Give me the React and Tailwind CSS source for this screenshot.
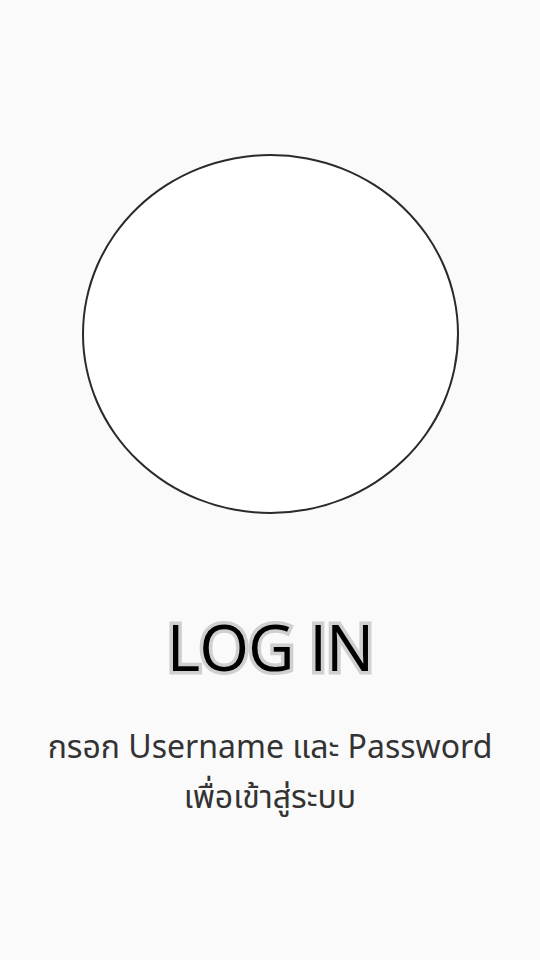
export default function App() {
  return (
    <div className="w-[540px] h-[960px] bg-[#fafafa] flex flex-col items-center overflow-hidden">
      <div className="mt-[154px] w-[377px] h-[360px] rounded-[50%] bg-white border-2 border-[#2a2a2a]" />
      <div className="mt-[95px] font-['Open_Sans',sans-serif] text-[64px] leading-[76px] text-black tracking-[-1px] [-webkit-text-stroke:7px_#cfcfcf] [paint-order:stroke_fill]">
        LOG IN
      </div>
      <div className="mt-[36px] font-['Noto_Sans','Noto_Sans_Thai',sans-serif] text-[32px] leading-[50px] text-[#333] text-center flex flex-col">
        <span>กรอก Username และ Password</span>
        <span>เพื่อเข้าสู่ระบบ</span>
      </div>
    </div>
  );
}
